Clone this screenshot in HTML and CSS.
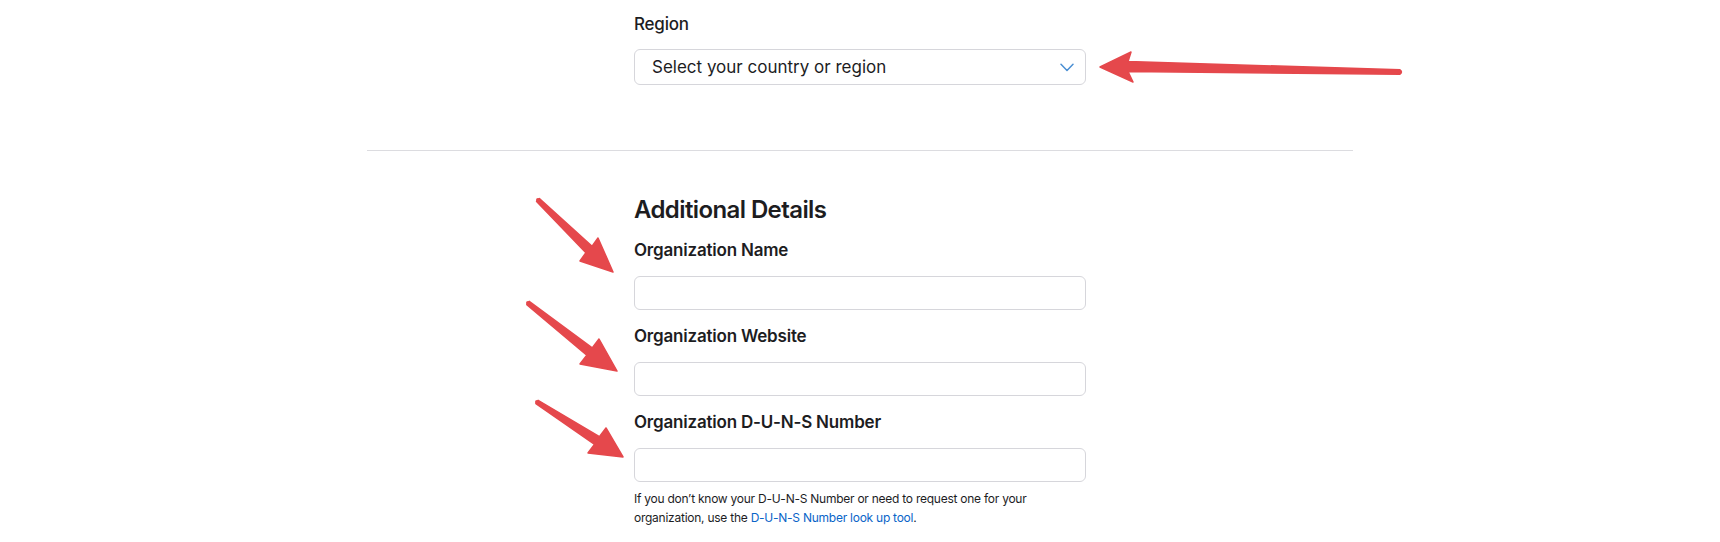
FILE: index.html
```html
<!DOCTYPE html>
<html lang="en">
<head>
<meta charset="utf-8">
<title>Additional Details</title>
<link rel="stylesheet" href="styles.css">
</head>
<body>
<div class="page">
  <section class="form-col">
    <label class="label label-region" for="region">Region</label>
    <div class="select" id="region">
      <span class="select-text">Select your country or region</span>
      <svg class="chevron" width="14" height="9" viewBox="0 0 14 9" aria-hidden="true">
        <path d="M1 1.2 L7 7.4 L13 1.2" fill="none" stroke="#4b8fd3" stroke-width="1.5" stroke-linecap="round" stroke-linejoin="round"/>
      </svg>
    </div>
  </section>

  <hr class="divider">

  <section class="form-col">
    <h2 class="heading">Additional Details</h2>

    <label class="label label-first" for="org-name">Organization Name</label>
    <div class="input" id="org-name"></div>

    <label class="label" for="org-site">Organization Website</label>
    <div class="input" id="org-site"></div>

    <label class="label" for="org-duns">Organization D-U-N-S Number</label>
    <div class="input" id="org-duns"></div>

    <p class="help">If you don’t know your D-U-N-S Number or need to request one for your organization, use the <a class="link" href="#">D-U-N-S Number look up tool</a>.</p>
  </section>

  <svg class="annotations" width="1720" height="542" viewBox="0 0 1720 542" aria-hidden="true">
    <g fill="#e5484c" stroke="#e5484c" stroke-width="1.5" stroke-linejoin="round">
      <polygon points="1100,67 1131,52 1128,61.5 1400,69.8 1400,74.2 1128,71.5 1133,82"/>
      <circle cx="1400" cy="72" r="2.2" stroke="none"/>
      <polygon points="613,272 598,238 592.1,246.3 539.4,198.6 536.6,201.4 585.9,252.7 580,261"/>
      <circle cx="538" cy="200" r="2" stroke="none"/>
      <polygon points="617,371 599,339 592.2,347.9 529.2,301.4 526.8,304.6 586.8,355.1 580,364"/>
      <circle cx="528" cy="303" r="2" stroke="none"/>
      <polygon points="623,457 606,428 599.4,436.7 538.1,400.3 535.9,403.7 594.6,444.3 588,453"/>
      <circle cx="537" cy="402" r="2" stroke="none"/>
    </g>
  </svg>
</div>
</body>
</html>
```

FILE: styles.css
```css
* {
  box-sizing: border-box;
}

html, body {
  margin: 0;
  padding: 0;
  background: #ffffff;
}

body {
  font-family: Inter, "Noto Sans", "Liberation Sans", sans-serif;
  color: #1d1d1f;
}

.page {
  position: relative;
  width: 1720px;
  height: 542px;
  overflow: hidden;
  padding-top: 13px;
}

.form-col {
  width: 452px;
  margin: 0 auto;
  display: flex;
  flex-direction: column;
}

.label {
  display: block;
  font-size: 17px;
  line-height: 22px;
  font-weight: 600;
  letter-spacing: -0.2px;
  margin-top: 15px;
  margin-bottom: 15px;
}

.label-region {
  margin-top: 0;
  margin-bottom: 14px;
  font-weight: 500;
}

.label-first {
  margin-top: 14px;
}

.select {
  height: 36px;
  border: 1px solid #d6d6db;
  border-radius: 6px;
  display: flex;
  align-items: center;
  justify-content: space-between;
  padding: 0 11px 0 17px;
  background: #fff;
}

.select-text {
  font-size: 17px;
  color: #1d1d1f;
}

.chevron {
  display: block;
}

.divider {
  width: 986px;
  margin: 65px auto 0;
  border: 0;
  border-top: 1px solid #dcdce0;
  height: 0;
}

.heading {
  margin: 44px 0 0;
  font-size: 24px;
  line-height: 30px;
  font-weight: 600;
  letter-spacing: -0.6px;
}

.input {
  height: 34px;
  border: 1px solid #d6d6db;
  border-radius: 6px;
  background: #fff;
}

.help {
  margin: 7px 0 0;
  font-size: 12px;
  line-height: 19px;
  letter-spacing: -0.25px;
  color: #1d1d1f;
}

.link {
  color: #0a64c8;
  text-decoration: none;
}

.annotations {
  position: absolute;
  top: 0;
  left: 0;
  pointer-events: none;
}
```
